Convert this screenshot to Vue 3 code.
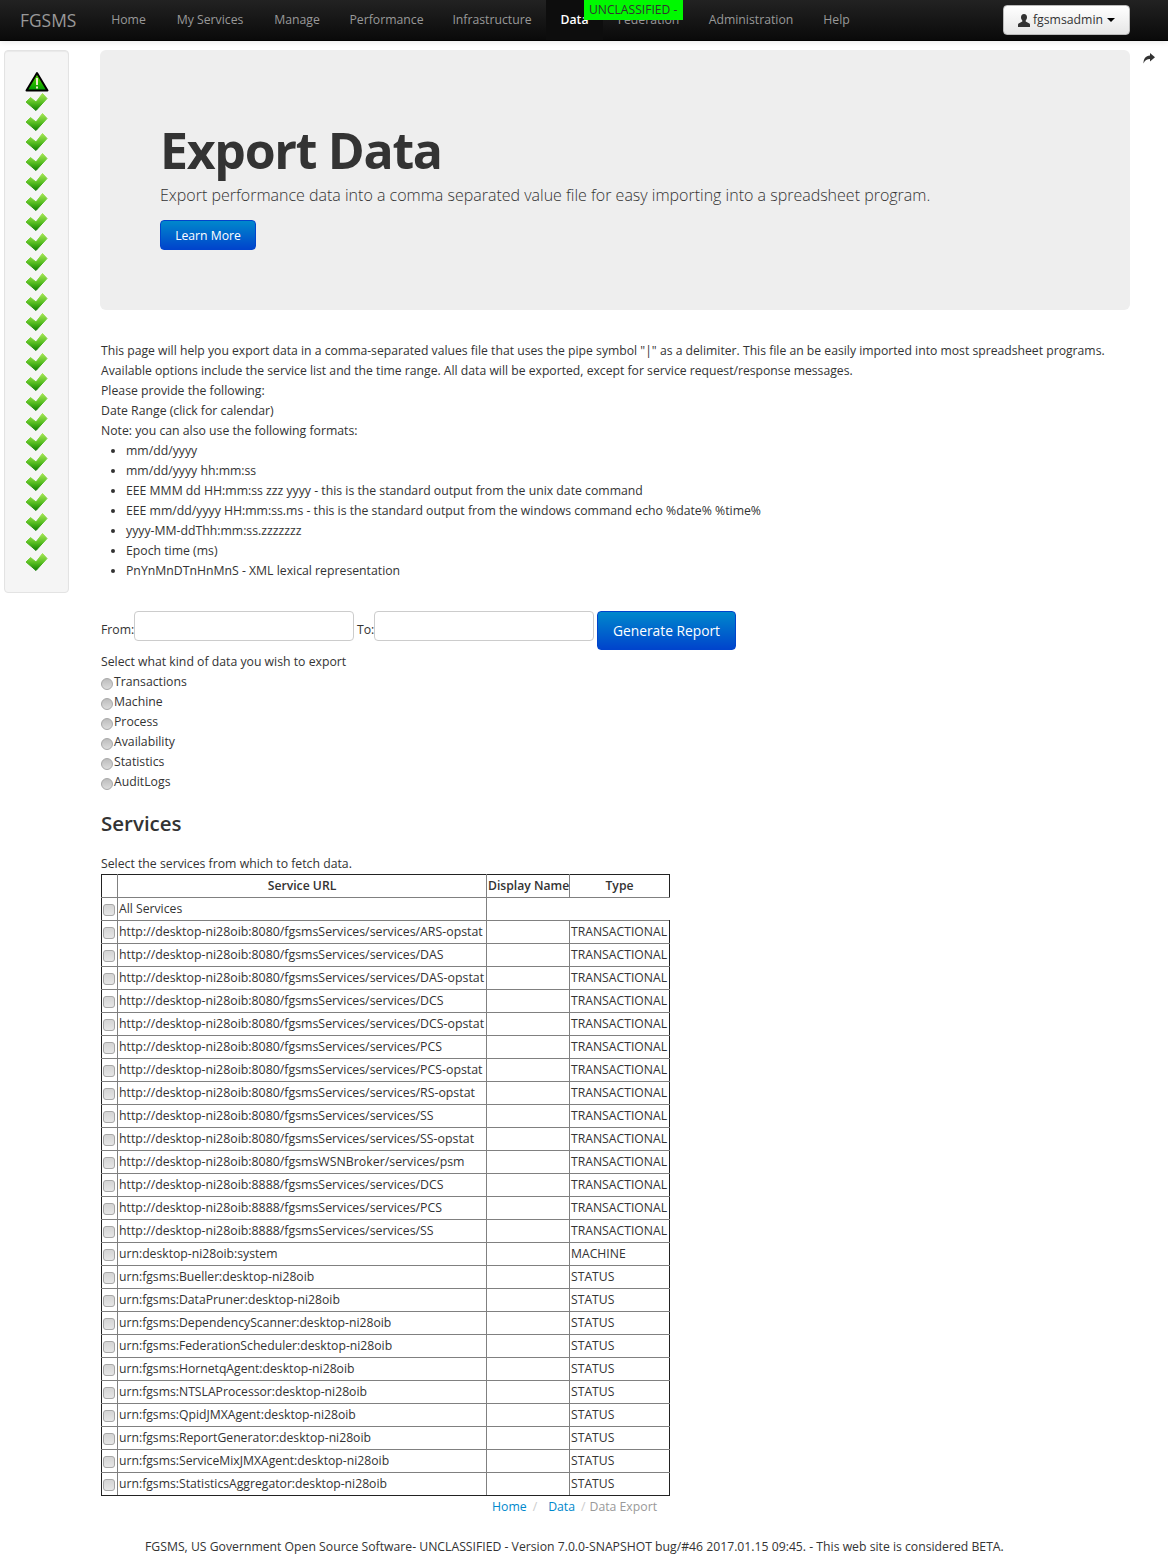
<script setup>
const nav = [
  { name: 'Home', w: 65 }, { name: 'My Services', w: 98 }, { name: 'Manage', w: 76 }, { name: 'Performance', w: 103 },
  { name: 'Infrastructure', w: 108 }, { name: 'Data', w: 57 }, { name: 'Federation', w: 91 }, { name: 'Administration', w: 114 }, { name: 'Help', w: 57 }
]
const formats = [
  'mm/dd/yyyy',
  'mm/dd/yyyy hh:mm:ss',
  'EEE MMM dd HH:mm:ss zzz yyyy - this is the standard output from the unix date command',
  'EEE mm/dd/yyyy HH:mm:ss.ms - this is the standard output from the windows command echo %date% %time%',
  'yyyy-MM-ddThh:mm:ss.zzzzzzz',
  'Epoch time (ms)',
  'PnYnMnDTnHnMnS - XML lexical representation'
]
const kinds = ['Transactions', 'Machine', 'Process', 'Availability', 'Statistics', 'AuditLogs']
const a = 'http://desktop-ni28oib:8080/fgsmsServices/services/'
const b = 'http://desktop-ni28oib:8888/fgsmsServices/services/'
const t = 'TRANSACTIONAL'
const rows = [
  [a + 'ARS-opstat', t], [a + 'DAS', t], [a + 'DAS-opstat', t], [a + 'DCS', t], [a + 'DCS-opstat', t],
  [a + 'PCS', t], [a + 'PCS-opstat', t], [a + 'RS-opstat', t], [a + 'SS', t], [a + 'SS-opstat', t],
  ['http://desktop-ni28oib:8080/fgsmsWSNBroker/services/psm', t],
  [b + 'DCS', t], [b + 'PCS', t], [b + 'SS', t],
  ['urn:desktop-ni28oib:system', 'MACHINE'],
  ...['Bueller', 'DataPruner', 'DependencyScanner', 'FederationScheduler', 'HornetqAgent', 'NTSLAProcessor', 'QpidJMXAgent', 'ReportGenerator', 'ServiceMixJMXAgent', 'StatisticsAggregator']
    .map((n) => ['urn:fgsms:' + n + ':desktop-ni28oib', 'STATUS'])
]
const checks = Array.from({ length: 24 }, (_, i) => i)
</script>

<template>
  <div class="root">
    <header class="navbar">
      <span class="brand">FGSMS</span>
      <ul class="menu">
        <li v-for="n in nav" :key="n.name" :class="{ active: n.name === 'Data' }" :style="{ width: n.w + 'px' }">{{ n.name }}</li>
      </ul>
      <button class="user">
        <svg width="12" height="13" viewBox="0 0 12 13"><path d="M6 0C4 0 3 1.500 3 3.300c0 1.300.5 2.500 1.300 3.200v1L.6 9.400C.2 9.700 0 10.200 0 10.700V13h12v-2.300c0-.5-.2-1-.6-1.300L7.700 7.500v-1C8.500 5.800 9 4.600 9 3.300 9 1.500 8 0 6 0z" fill="#333"/></svg>
        <span>fgsmsadmin</span>
        <i class="caret"></i>
      </button>
      <div class="badge">UNCLASSIFIED -</div>
    </header>

    <div class="page">
      <aside class="well">
        <svg class="icon" width="24" height="21" viewBox="0 0 24 21">
          <defs>
            <linearGradient id="warn" x1="0" y1="0" x2="0" y2="1"><stop offset="0" stop-color="#5fe000"/><stop offset="1" stop-color="#009a00"/></linearGradient>
            <linearGradient id="chk" x1="0" y1="0" x2="0" y2="1"><stop offset="0" stop-color="#a6e654"/><stop offset="0.55" stop-color="#56bd20"/><stop offset="1" stop-color="#0f7d00"/></linearGradient>
          </defs>
          <path d="M12 2 L22.500 19.500 H1.500 Z" fill="url(#warn)" stroke="#000" stroke-width="2" stroke-linejoin="round"/>
          <rect x="11" y="7" width="2" height="7" fill="#f4e9d0"/>
          <rect x="11" y="15.500" width="2" height="2" fill="#f4e9d0"/>
        </svg>
        <svg v-for="c in checks" :key="c" class="icon" width="24" height="20" viewBox="0 0 24 20">
          <path d="M1 10 L5.500 5.500 L11 10 L17.500 1.500 L22 6.500 L11 18.500 Z" fill="url(#chk)" stroke="url(#chk)" stroke-width="1" stroke-linejoin="round"/>
        </svg>
      </aside>

      <main class="content">
        <section class="hero">
          <h1>Export Data</h1>
          <p>Export performance data into a comma separated value file for easy importing into a spreadsheet program.</p>
          <button class="btn small">Learn More</button>
        </section>

        <div class="copy">
          <div class="lead">This page will help you export data in a comma-separated values file that uses the pipe symbol "|" as a delimiter. This file an be easily imported into most spreadsheet programs.</div>
          <div class="lead">Available options include the service list and the time range. All data will be exported, except for service request/response messages.</div>
          <div>Please provide the following:</div>
          <div>Date Range (click for calendar)</div>
          <div>Note: you can also use the following formats:</div>
          <ul class="formats">
            <li v-for="f in formats" :key="f">{{ f }}</li>
          </ul>
        </div>

        <form class="range" @submit.prevent>
          <label class="from">From:</label>
          <input class="field" type="text" />
          <label class="to">To:</label>
          <input class="field" type="text" />
          <button class="btn large">Generate Report</button>
        </form>

        <div class="copy">Select what kind of data you wish to export</div>
        <label v-for="k in kinds" :key="k" class="kind">
          <input type="radio" name="kind" class="radio" />{{ k }}
        </label>

        <h3>Services</h3>
        <div class="copy">Select the services from which to fetch data.</div>

        <table>
          <colgroup><col class="c1" /><col class="c2" /><col class="c3" /><col class="c4" /></colgroup>
          <thead>
            <tr><th></th><th>Service URL</th><th>Display Name</th><th>Type</th></tr>
          </thead>
          <tbody>
            <tr class="all">
              <td><input type="checkbox" class="box" /></td>
              <td>All Services</td>
            </tr>
            <tr v-for="r in rows" :key="r[0]">
              <td><input type="checkbox" class="box" /></td>
              <td :class="{ url: r[0].startsWith('http') }">{{ r[0] }}</td>
              <td></td>
              <td>{{ r[1] }}</td>
            </tr>
          </tbody>
        </table>

        <nav class="crumbs">
          <a>Home</a><span class="sep first">/</span><a>Data</a><span class="sep">/</span><span class="cur">Data Export</span>
        </nav>
      </main>

      <svg class="share" width="12" height="11" viewBox="0 0 12 11"><path d="M7 0 L12 4.300 L7 8.600 V6 C4 6 2 7 .5 10.500 C.5 6 2.500 2.600 7 2.500 Z" fill="#333"/></svg>
    </div>

    <footer>FGSMS, US Government Open Source Software- UNCLASSIFIED - Version 7.0.0-SNAPSHOT bug/#46 2017.01.15 09:45. - This web site is considered BETA.</footer>
  </div>
</template>

<style>
html, body { margin: 0; background: #fff; }
</style>

<style scoped>
.root {
  font-family: "Open Sans", "Noto Sans", sans-serif;
  font-size: 12.25px;
  line-height: 20px;
  color: #333;
  height: 1567px;
  overflow: hidden;
}
.navbar {
  position: relative;
  height: 41px;
  box-sizing: border-box;
  display: flex;
  align-items: flex-start;
  background: linear-gradient(#222, #0a0a0a);
  border-bottom: 1px solid #000;
  box-shadow: 0 1px 6px rgba(0, 0, 0, 0.1);
}
.brand {
  margin-left: 20px;
  width: 76px;
  font-size: 17.4px;
  line-height: 40px;
  color: #999;
}
.menu {
  display: flex;
  list-style: none;
  margin: 0;
  padding: 0;
  flex: 1;
}
.menu li {
  text-align: center;
  line-height: 39px;
  height: 40px;
  color: #999;
  font-size: 12.25px;
}
.menu li.active {
  color: #fff;
  background: #0d0d0d;
  font-weight: 600;
}
.user {
  margin: 5px 38px 0 0;
  width: 127px;
  height: 30px;
  box-sizing: border-box;
  display: flex;
  align-items: center;
  justify-content: center;
  gap: 3px;
  padding: 0;
  border: 1px solid #bbb;
  border-radius: 4px;
  background: linear-gradient(#fff, #e6e6e6);
  font: inherit;
  color: #333;
}
.caret {
  display: block;
  margin-left: 1px;
  border-left: 4px solid transparent;
  border-right: 4px solid transparent;
  border-top: 4px solid #000;
}
.badge {
  position: absolute;
  left: 584px;
  top: 0;
  width: 99px;
  height: 20px;
  box-sizing: border-box;
  padding-left: 5px;
  background: #00f900;
  white-space: nowrap;
  line-height: 19px;
  font-size: 12.1px;
}
.page {
  display: flex;
  align-items: flex-start;
  margin-top: 9px;
}
.well {
  margin-left: 4px;
  width: 65px;
  height: 543px;
  box-sizing: border-box;
  padding: 20px 0 0;
  display: flex;
  flex-direction: column;
  align-items: center;
  background: #f5f5f5;
  border: 1px solid #e3e3e3;
  border-radius: 4px;
  box-shadow: inset 0 1px 1px rgba(0, 0, 0, 0.05);
}
.icon { display: block; flex: none; }
.content {
  margin-left: 31px;
  width: 1030px;
}
.share { margin: 3px 0 0 13px; }
.hero {
  height: 260px;
  box-sizing: border-box;
  padding: 68px 60px 0;
  background: #eee;
  border-radius: 6px;
}
.hero h1 {
  margin: 0;
  font-size: 50px;
  line-height: 64px;
  font-weight: 700;
  color: #333;
  letter-spacing: -1.3px;
}
.hero p {
  margin: 1px 0 13px;
  font-size: 16px;
  line-height: 24px;
  font-weight: 300;
  color: #333;
}
.btn {
  border-radius: 4px;
  border: 1px solid #04c;
  background: linear-gradient(#08c, #04c);
  color: #fff;
  font-family: inherit;
  padding: 0;
  display: block;
}
.small { width: 96px; height: 30px; font-size: 12.2px; }
.large { width: 139px; height: 39px; font-size: 13.8px; margin-left: 3px; }
.copy { padding-left: 1px; }
.lead { font-size: 12.19px; white-space: nowrap; }
.hero + .copy { margin-top: 31px; }
.formats { margin: 0; padding: 0 0 0 25px; }
.range {
  display: flex;
  align-items: flex-start;
  margin-top: 30px;
  height: 41px;
}
.from, .to { line-height: 20px; margin-top: 9px; }
.from { padding-left: 1px; width: 33px; white-space: nowrap; }
.to { width: 17px; margin-left: 3px; white-space: nowrap; }
.field {
  width: 220px;
  height: 30px;
  box-sizing: border-box;
  border: 1px solid #ccc;
  border-radius: 4px;
  background: #fff;
  margin: 0;
}
.kind { display: flex; padding-left: 1px; height: 20px; }
.radio, .box {
  appearance: none;
  display: block;
  margin: 0;
  box-sizing: border-box;
}
.radio {
  flex: none;
  width: 12px;
  height: 12px;
  margin: 6px 1px 0 0;
  border-radius: 50%;
  background: linear-gradient(#bdbdbd, #dcdcdc);
  border: 1px solid #a8a8a8;
}
h3 {
  margin: 18px 0 17px 1px;
  font-size: 20.5px;
  line-height: 27px;
  font-weight: 600;
  color: #333;
}
table {
  margin: 0 0 0 1px;
  border-collapse: collapse;
  table-layout: fixed;
  width: 568px;
}
.c1 { width: 16px; }
.c2 { width: 369px; }
.c3 { width: 83px; }
.c4 { width: 100px; }
th, td {
  height: 23px;
  box-sizing: border-box;
  padding: 0 1px;
  border: 1px solid #808080;
  white-space: nowrap;
  overflow: hidden;
  text-align: left;
  font-size: 12.2px;
}
th { text-align: center; font-weight: 600; border-top-color: #222; }
td:first-child { vertical-align: top; }
td.url { font-size: 12.35px; }
tr > :first-child { border-left-color: #222; }
tr:not(.all) > :last-child { border-right-color: #222; }
tbody tr:last-child td { border-bottom-color: #222; }
.all td:last-child { border-right: 1px solid #808080; }
.box {
  width: 12px;
  height: 12px;
  margin: 5.5px 0 0;
  border-radius: 3px;
  background: linear-gradient(#d4d4d4, #e6e6e6);
  border: 1px solid #a8a8a8;
}
.crumbs {
  margin-left: 392px;
  padding-top: 1px;
  height: 20px;
  display: flex;
}
.crumbs a { color: #08c; }
.sep { color: #ccc; margin: 0 4px 0 6px; }
.sep.first { margin-right: 11px; }
.cur { color: #999; }
footer {
  margin-top: 20px;
  padding-left: 145px;
  white-space: nowrap;
  font-size: 12.22px;
}
</style>
